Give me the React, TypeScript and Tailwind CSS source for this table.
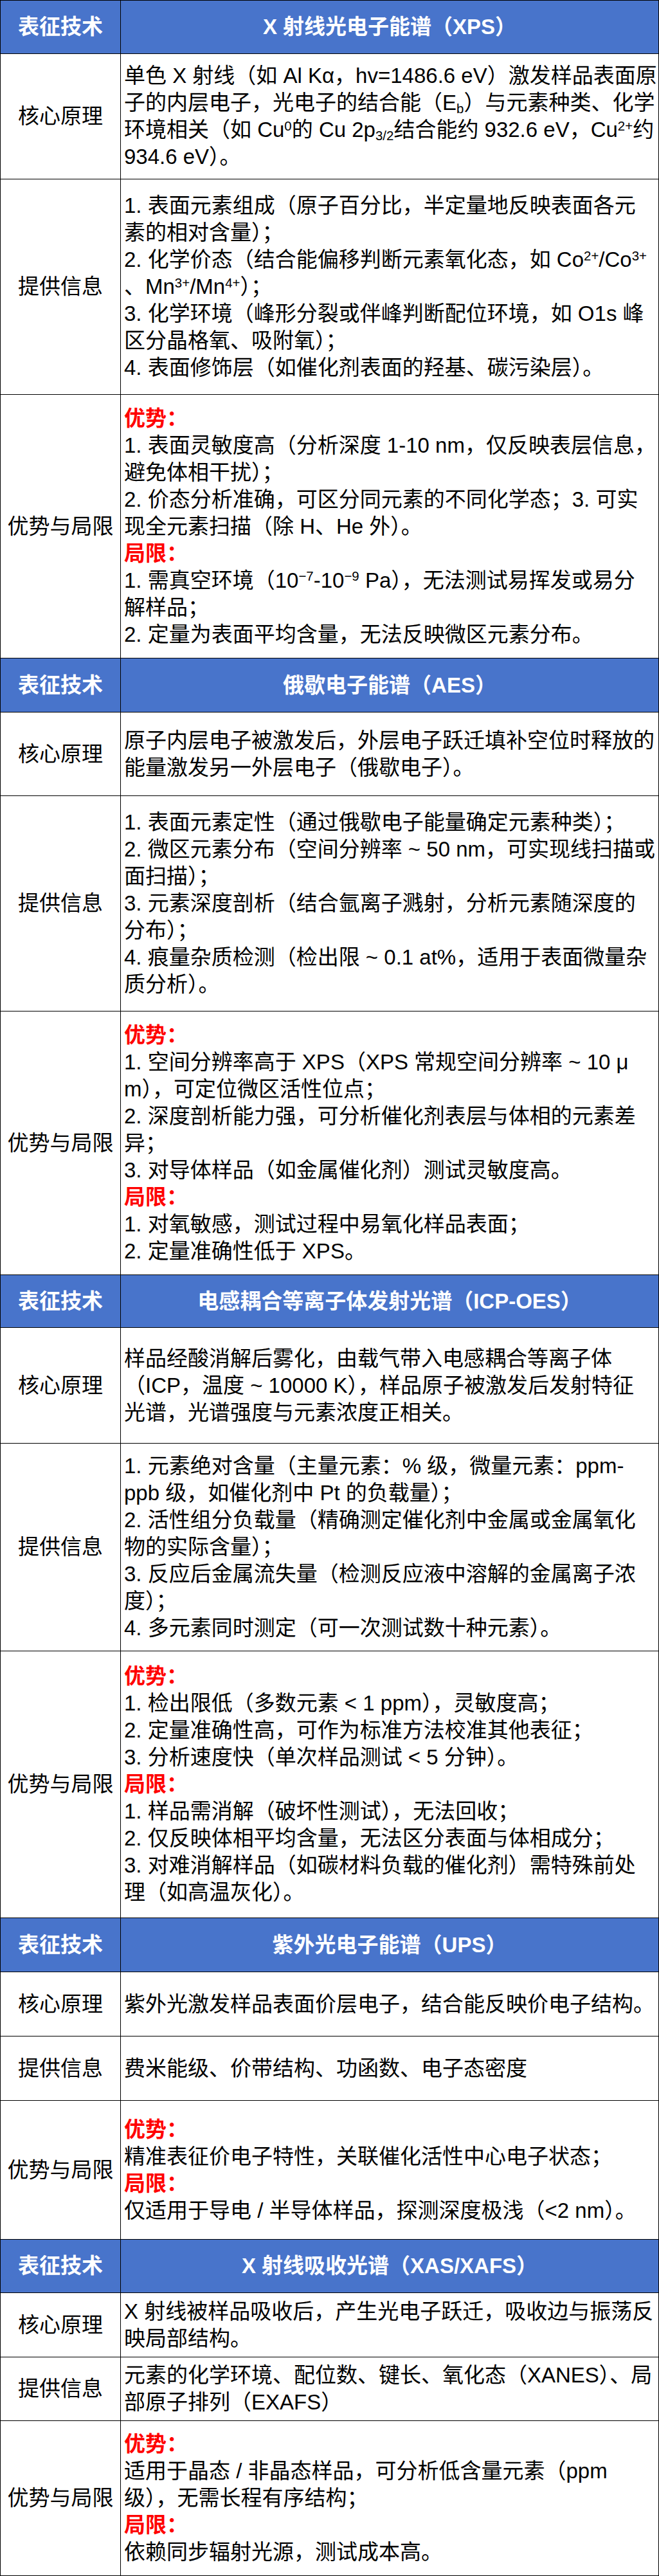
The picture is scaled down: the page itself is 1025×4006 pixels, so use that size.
import React from "react";

type Row = { label: string; h: string; lines: React.ReactNode[] };
type Block = { title: string; headH: string; rows: Row[] };

const Sup = ({ children }: { children: React.ReactNode }) => (
  <sup className="text-[0.62em]">{children}</sup>
);
const Sub = ({ children }: { children: React.ReactNode }) => (
  <sub className="text-[0.62em]">{children}</sub>
);

const Good = <span className="font-bold text-[#ff0000]">优势：</span>;
const Bad = <span className="font-bold text-[#ff0000]">局限：</span>;

const blocks: Block[] = [
  {
    title: "X 射线光电子能谱（XPS）",
    headH: "h-[83px]",
    rows: [
      {
        label: "核心原理",
        h: "h-[195px]",
        lines: [
          "单色 X 射线（如 Al Kα，hv=1486.6 eV）激发样品表面原",
          <>子的内层电子，光电子的结合能（E<Sub>b</Sub>）与元素种类、化学</>,
          <>
            环境相关（如 Cu<Sup>0</Sup>的 Cu 2p<Sub>3/2</Sub>结合能约 932.6 eV，Cu<Sup>2+</Sup>约
          </>,
          "934.6 eV）。",
        ],
      },
      {
        label: "提供信息",
        h: "h-[335px]",
        lines: [
          "1. 表面元素组成（原子百分比，半定量地反映表面各元",
          "素的相对含量）；",
          <>
            2. 化学价态（结合能偏移判断元素氧化态，如 Co<Sup>2+</Sup>/Co<Sup>3+</Sup>
          </>,
          <>
            、Mn<Sup>3+</Sup>/Mn<Sup>4+</Sup>）；
          </>,
          "3. 化学环境（峰形分裂或伴峰判断配位环境，如 O1s 峰",
          "区分晶格氧、吸附氧）；",
          "4. 表面修饰层（如催化剂表面的羟基、碳污染层）。",
        ],
      },
      {
        label: "优势与局限",
        h: "h-[410px]",
        lines: [
          Good,
          "1. 表面灵敏度高（分析深度 1-10 nm，仅反映表层信息，",
          "避免体相干扰）；",
          "2. 价态分析准确，可区分同元素的不同化学态；3. 可实",
          "现全元素扫描（除 H、He 外）。",
          Bad,
          <>
            1. 需真空环境（10<Sup>−7</Sup>-10<Sup>−9</Sup> Pa），无法测试易挥发或易分
          </>,
          "解样品；",
          "2. 定量为表面平均含量，无法反映微区元素分布。",
        ],
      },
    ],
  },
  {
    title: "俄歇电子能谱（AES）",
    headH: "h-[84px]",
    rows: [
      {
        label: "核心原理",
        h: "h-[130px]",
        lines: [
          "原子内层电子被激发后，外层电子跃迁填补空位时释放的",
          "能量激发另一外层电子（俄歇电子）。",
        ],
      },
      {
        label: "提供信息",
        h: "h-[335px]",
        lines: [
          "1. 表面元素定性（通过俄歇电子能量确定元素种类）；",
          "2. 微区元素分布（空间分辨率 ~ 50 nm，可实现线扫描或",
          "面扫描）；",
          "3. 元素深度剖析（结合氩离子溅射，分析元素随深度的",
          "分布）；",
          "4. 痕量杂质检测（检出限 ~ 0.1 at%，适用于表面微量杂",
          "质分析）。",
        ],
      },
      {
        label: "优势与局限",
        h: "h-[410px]",
        lines: [
          Good,
          "1. 空间分辨率高于 XPS（XPS 常规空间分辨率 ~ 10 μ",
          "m），可定位微区活性位点；",
          "2. 深度剖析能力强，可分析催化剂表层与体相的元素差",
          "异；",
          "3. 对导体样品（如金属催化剂）测试灵敏度高。",
          Bad,
          "1. 对氧敏感，测试过程中易氧化样品表面；",
          "2. 定量准确性低于 XPS。",
        ],
      },
    ],
  },
  {
    title: "电感耦合等离子体发射光谱（ICP-OES）",
    headH: "h-[82px]",
    rows: [
      {
        label: "核心原理",
        h: "h-[180px]",
        lines: [
          "样品经酸消解后雾化，由载气带入电感耦合等离子体",
          "（ICP，温度 ~ 10000 K），样品原子被激发后发射特征",
          "光谱，光谱强度与元素浓度正相关。",
        ],
      },
      {
        label: "提供信息",
        h: "h-[323px]",
        lines: [
          "1. 元素绝对含量（主量元素：% 级，微量元素：ppm-",
          "ppb 级，如催化剂中 Pt 的负载量）；",
          "2. 活性组分负载量（精确测定催化剂中金属或金属氧化",
          "物的实际含量）；",
          "3. 反应后金属流失量（检测反应液中溶解的金属离子浓",
          "度）；",
          "4. 多元素同时测定（可一次测试数十种元素）。",
        ],
      },
      {
        label: "优势与局限",
        h: "h-[415px]",
        lines: [
          Good,
          "1. 检出限低（多数元素 < 1 ppm），灵敏度高；",
          "2. 定量准确性高，可作为标准方法校准其他表征；",
          "3. 分析速度快（单次样品测试 < 5 分钟）。",
          Bad,
          "1. 样品需消解（破坏性测试），无法回收；",
          "2. 仅反映体相平均含量，无法区分表面与体相成分；",
          "3. 对难消解样品（如碳材料负载的催化剂）需特殊前处",
          "理（如高温灰化）。",
        ],
      },
    ],
  },
  {
    title: "紫外光电子能谱（UPS）",
    headH: "h-[84px]",
    rows: [
      {
        label: "核心原理",
        h: "h-[100px]",
        lines: ["紫外光激发样品表面价层电子，结合能反映价电子结构。"],
      },
      {
        label: "提供信息",
        h: "h-[100px]",
        lines: ["费米能级、价带结构、功函数、电子态密度"],
      },
      {
        label: "优势与局限",
        h: "h-[216px]",
        lines: [
          Good,
          "精准表征价电子特性，关联催化活性中心电子状态；",
          Bad,
          "仅适用于导电 / 半导体样品，探测深度极浅（<2 nm）。",
        ],
      },
    ],
  },
  {
    title: "X 射线吸收光谱（XAS/XAFS）",
    headH: "h-[83px]",
    rows: [
      {
        label: "核心原理",
        h: "h-[100px]",
        lines: [
          "X 射线被样品吸收后，产生光电子跃迁，吸收边与振荡反",
          "映局部结构。",
        ],
      },
      {
        label: "提供信息",
        h: "h-[99px]",
        lines: [
          "元素的化学环境、配位数、键长、氧化态（XANES）、局",
          "部原子排列（EXAFS）",
        ],
      },
      {
        label: "优势与局限",
        h: "h-[241px]",
        lines: [
          Good,
          "适用于晶态 / 非晶态样品，可分析低含量元素（ppm",
          "级），无需长程有序结构；",
          Bad,
          "依赖同步辐射光源，测试成本高。",
        ],
      },
    ],
  },
];

const Header = ({ title, h }: { title: string; h: string }) => (
  <div className={`flex ${h} border-b border-black bg-[#4874cb] text-white font-bold`}>
    <div className="w-[187px] shrink-0 border-r border-black flex items-center justify-center">
      表征技术
    </div>
    <div className="flex-1 flex items-center justify-center">{title}</div>
  </div>
);

const BodyRow = ({ row }: { row: Row }) => (
  <div className={`flex ${row.h} border-b border-black`}>
    <div className="w-[187px] shrink-0 border-r border-black flex items-center justify-center whitespace-nowrap">
      {row.label}
    </div>
    <div className="flex-1 flex flex-col justify-center pl-[5px] overflow-hidden">
      {row.lines.map((l, i) => (
        <div key={i} className="h-[42px] leading-[42px] whitespace-nowrap">
          {l}
        </div>
      ))}
    </div>
  </div>
);

export default function App() {
  return (
    <div className="w-[1025px] bg-white text-black text-[33px] font-['Liberation_Sans','Noto_Sans_CJK_SC',sans-serif]">
      <div className="border-t border-l border-r border-black">
        {blocks.map((b) => (
          <div key={b.title}>
            <Header title={b.title} h={b.headH} />
            {b.rows.map((r) => (
              <BodyRow key={r.label} row={r} />
            ))}
          </div>
        ))}
      </div>
    </div>
  );
}
